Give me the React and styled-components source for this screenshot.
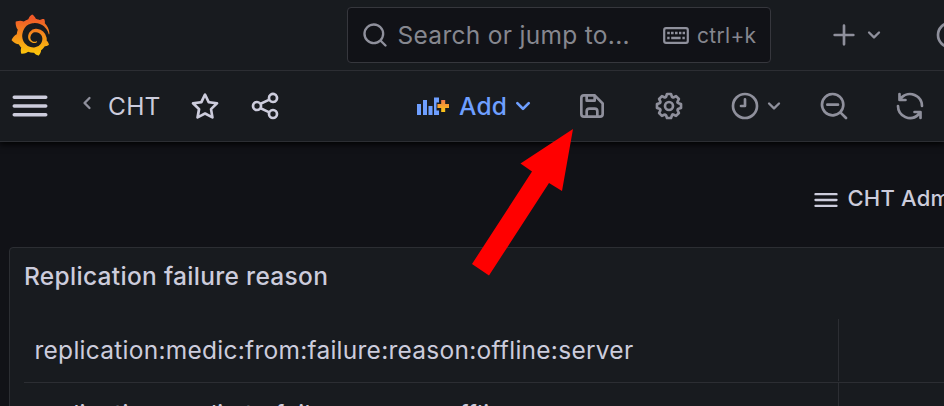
import React from 'react';
import styled, { createGlobalStyle } from 'styled-components';
import { SiGrafana } from 'react-icons/si';

const GlobalStyle = createGlobalStyle`
  * { box-sizing: border-box; }
  body {
    margin: 0;
    background: #111217;
    color: #ccccdc;
    font-family: Inter, "Liberation Sans", sans-serif;
    overflow: hidden;
  }
`;

const Page = styled.div`
  position: relative;
  width: 944px;
  height: 406px;
  overflow: hidden;
  display: flex;
  flex-direction: column;
  background: #111217;
`;

const Bar = styled.div`
  flex: none;
  display: flex;
  align-items: center;
  height: 71px;
  background: #181b1f;
  border-bottom: 1px solid #2c2e33;
`;

const Toolbar = styled(Bar)`
  box-shadow: 0 1px 7px 1px #000;
  clip-path: inset(0 0 -20px 0);
`;

const Svg = styled.svg`
  flex: none;
  display: block;
  width: ${(p) => p.$size}px;
  height: ${(p) => p.$size}px;
  margin-left: ${(p) => p.$gap || 0}px;
  margin-bottom: ${(p) => p.$lift || 0}px;
  fill: ${(p) => p.$color || '#8f909c'};
`;

const Logo = styled(SiGrafana)`
  flex: none;
  width: 41px;
  height: 42px;
  margin: 0 0 1px 10px;
`;

const GradientDefs = styled.svg`
  position: absolute;
  width: 0;
  height: 0;
`;

const SearchBox = styled.div`
  flex: none;
  display: flex;
  align-items: center;
  width: 424px;
  height: 56px;
  margin-left: 296px;
  padding-left: 13px;
  background: #111217;
  border: 1px solid #36373d;
  border-radius: 4px;
  color: #86878f;
  white-space: nowrap;
`;

const Placeholder = styled.span`
  width: 265px;
  margin-left: 8.5px;
  font-size: 24.5px;
  letter-spacing: 0.3px;
`;

const Keyboard = styled.svg`
  flex: none;
  width: 26px;
  height: 17px;
`;

const Shortcut = styled.span`
  margin-left: 8.5px;
  font-size: 21px;
  letter-spacing: 0.3px;
`;

const Divider = styled.div`
  width: 1px;
  height: 42px;
  margin-left: 23px;
  background: #3a3b41;
`;

const Crumb = styled.span`
  width: 54px;
  margin-left: 7px;
  font-size: 24.5px;
  letter-spacing: 0.26px;
`;

const AddButton = styled.div`
  flex: none;
  display: flex;
  align-items: center;
  width: 120px;
  margin-left: 136px;
  color: #6e9fff;
  font-size: 24.5px;
  font-weight: 500;
  letter-spacing: 0.26px;
`;

const AddPanel = styled.svg`
  flex: none;
  width: 33px;
  height: 20px;
`;

const AddLabel = styled.span`
  width: 48px;
  margin-left: 9px;
`;

const Submenu = styled.div`
  flex: none;
  display: flex;
  align-items: center;
  height: 105px;
  padding: 10px 0 0 812px;
  white-space: nowrap;
`;

const LinkText = styled.span`
  margin: 0 0 3px 7.5px;
  font-size: 22px;
  font-weight: 500;
  letter-spacing: 0.2px;
`;

const Panel = styled.section`
  flex: none;
  width: 960px;
  height: 190px;
  margin-left: 9px;
  padding-left: 14px;
  background: #181b1f;
  border: 1px solid #2c2e33;
  border-radius: 4px;
`;

const PanelTitle = styled.h2`
  margin: 0;
  height: 71px;
  line-height: 57px;
  font-size: 24.5px;
  font-weight: 500;
  letter-spacing: 0.3px;
`;

const Row = styled.div`
  display: flex;
  height: 64px;
  padding-bottom: 1px;
  border-bottom: 1px solid #2c2e33;
`;

const Cell = styled.div`
  width: 815px;
  padding-left: 10.5px;
  border-right: 1px solid #2c2e33;
  font-size: 24.5px;
  line-height: 63px;
  letter-spacing: 0.26px;
  white-space: nowrap;
`;

const Arrow = styled.svg`
  position: absolute;
  left: 472px;
  top: 129px;
  width: 102px;
  height: 147px;
  fill: #ff0000;
`;

const paths = {
  search: 'M21.71,20.29,18,16.61A9,9,0,1,0,16.61,18l3.68,3.68a1,1,0,0,0,1.42,0A1,1,0,0,0,21.71,20.29ZM11,18a7,7,0,1,1,7-7A7,7,0,0,1,11,18Z',
  searchMinus: 'M21.71,20.29,18,16.61A9,9,0,1,0,16.61,18l3.68,3.68a1,1,0,0,0,1.42,0A1,1,0,0,0,21.71,20.29ZM11,18a7,7,0,1,1,7-7A7,7,0,0,1,11,18Zm4-8H7a1,1,0,0,0,0,2h8a1,1,0,0,0,0-2Z',
  plus: 'M19,11H13V5a1,1,0,0,0-2,0v6H5a1,1,0,0,0,0,2h6v6a1,1,0,0,0,2,0V13h6a1,1,0,0,0,0-2Z',
  down: 'M17,9.17a1,1,0,0,0-1.41,0L12,12.71,8.46,9.17a1,1,0,0,0-1.41,0,1,1,0,0,0,0,1.42l4.24,4.24a1,1,0,0,0,1.42,0L17,10.59A1,1,0,0,0,17,9.17Z',
  left: 'M11.29,12l3.54-3.54a1,1,0,0,0,0-1.41,1,1,0,0,0-1.42,0L9.17,11.29a1,1,0,0,0,0,1.42L13.41,17a1,1,0,0,0,.71.29,1,1,0,0,0,.71-.29,1,1,0,0,0,0-1.41Z',
  star: 'M22,9.67A1,1,0,0,0,21.14,9l-5.69-.83L12.9,3a1,1,0,0,0-1.8,0L8.55,8.16,2.86,9a1,1,0,0,0-.81.68,1,1,0,0,0,.25,1l4.13,4-1,5.68A1,1,0,0,0,6.9,21.44L12,18.77l5.1,2.67a.93.93,0,0,0,.46.12,1,1,0,0,0,.59-.19,1,1,0,0,0,.4-1l-1-5.68,4.13-4A1,1,0,0,0,22,9.67Zm-6.15,4a1,1,0,0,0-.29.88l.72,4.2-3.76-2a1.06,1.06,0,0,0-.94,0l-3.76,2,.72-4.2a1,1,0,0,0-.29-.88l-3-3,4.21-.61a1,1,0,0,0,.76-.55L12,5.7l1.88,3.82a1,1,0,0,0,.76.55l4.21.61Z',
  share: 'M18,14a4,4,0,0,0-3.08,1.48l-5.1-2.35a3.64,3.64,0,0,0,0-2.26l5.1-2.35A4,4,0,1,0,14,6a4.17,4.17,0,0,0,.07.71L8.79,9.14a4,4,0,1,0,0,5.72l5.28,2.43A4.17,4.17,0,0,0,14,18a4,4,0,1,0,4-4ZM18,4a2,2,0,1,1-2,2A2,2,0,0,1,18,4ZM6,14a2,2,0,1,1,2-2A2,2,0,0,1,6,14Zm12,6a2,2,0,1,1,2-2A2,2,0,0,1,18,20Z',
  save: 'M20.71,9.29l-6-6a1,1,0,0,0-.32-.21A1.09,1.09,0,0,0,14,3H6A3,3,0,0,0,3,6V18a3,3,0,0,0,3,3H18a3,3,0,0,0,3-3V10A1,1,0,0,0,20.71,9.29ZM9,5h4V7H9Zm6,14H9V16a1,1,0,0,1,1-1h4a1,1,0,0,1,1,1Zm4-1a1,1,0,0,1-1,1H17V16a3,3,0,0,0-3-3H10a3,3,0,0,0-3,3v3H6a1,1,0,0,1-1-1V6A1,1,0,0,1,6,5H7V8A1,1,0,0,0,8,9h6a1,1,0,0,0,1-1V6.41l4,4Z',
  cog: 'M21.32,9.55l-1.89-.63.89-1.78A1,1,0,0,0,20.13,6L18,3.87a1,1,0,0,0-1.15-.19l-1.78.89-.63-1.89A1,1,0,0,0,13.5,2h-3a1,1,0,0,0-.95.68L8.92,4.57,7.14,3.68A1,1,0,0,0,6,3.87L3.87,6a1,1,0,0,0-.19,1.15l.89,1.78-1.89.63A1,1,0,0,0,2,10.5v3a1,1,0,0,0,.68.95l1.89.63-.89,1.78A1,1,0,0,0,3.87,18L6,20.13a1,1,0,0,0,1.15.19l1.78-.89.63,1.89a1,1,0,0,0,.95.68h3a1,1,0,0,0,.95-.68l.63-1.89,1.78.89A1,1,0,0,0,18,20.13L20.13,18a1,1,0,0,0,.19-1.15l-.89-1.78,1.89-.63A1,1,0,0,0,22,13.5v-3A1,1,0,0,0,21.32,9.55ZM20,12.78l-1.2.4A2,2,0,0,0,17.64,16l.57,1.14-1.1,1.1L16,17.64a2,2,0,0,0-2.79,1.16l-.4,1.2H11.22l-.4-1.2A2,2,0,0,0,8,17.64l-1.14.57-1.1-1.1L6.36,16A2,2,0,0,0,5.2,13.18L4,12.78V11.22l1.2-.4A2,2,0,0,0,6.36,8L5.79,6.89l1.1-1.1L8,6.36A2,2,0,0,0,10.82,5.2l.4-1.2h1.56l.4,1.2A2,2,0,0,0,16,6.36l1.14-.57,1.1,1.1L17.64,8a2,2,0,0,0,1.16,2.79l1.2.4ZM12,8a4,4,0,1,0,4,4A4,4,0,0,0,12,8Zm0,6a2,2,0,1,1,2-2A2,2,0,0,1,12,14Z',
  clock: 'M12,2A10,10,0,1,0,22,12,10,10,0,0,0,12,2Zm0,18a8,8,0,1,1,8-8A8,8,0,0,1,12,20ZM12,6a1,1,0,0,0-1,1v4H9a1,1,0,0,0,0,2h3a1,1,0,0,0,1-1V7A1,1,0,0,0,12,6Z',
  circle: 'M12,2A10,10,0,1,0,22,12,10,10,0,0,0,12,2Zm0,18a8,8,0,1,1,8-8A8,8,0,0,1,12,20Z',
  sync: 'M19.91,15.51H15.38a1,1,0,0,0,0,2h2.4A8,8,0,0,1,4,12a1,1,0,0,0-2,0,10,10,0,0,0,16.88,7.23V21a1,1,0,0,0,2,0V16.5A1,1,0,0,0,19.91,15.51ZM12,2A10,10,0,0,0,5.12,4.77V3a1,1,0,0,0-2,0V7.5a1,1,0,0,0,1,1h4.5a1,1,0,0,0,0-2H6.22A8,8,0,0,1,20,12a1,1,0,0,0,2,0A10,10,0,0,0,12,2Z',
  bars: 'M3,8H21a1,1,0,0,0,0-2H3A1,1,0,0,0,3,8Zm18,8H3a1,1,0,0,0,0,2H21a1,1,0,0,0,0-2Zm0-5H3a1,1,0,0,0,0,2H21a1,1,0,0,0,0-2Z',
};

function Icon({ name, size = 32, gap, color, lift }) {
  return (
    <Svg viewBox="0 0 24 24" $size={size} $gap={gap} $color={color} $lift={lift}>
      <path d={paths[name]} />
    </Svg>
  );
}

const bright = '#ccccdc';
const rows = [
  'replication:medic:from:failure:reason:offline:server',
  'replication:medic:to:failure:reason:offline:server',
];

export default function App() {
  return (
    <Page>
      <GlobalStyle />
      <GradientDefs>
        <defs>
          <linearGradient id="flame" x1="0" y1="0" x2="0" y2="1">
            <stop offset="0.1" stopColor="#f05a28" />
            <stop offset="1" stopColor="#fbca0a" />
          </linearGradient>
          <linearGradient id="plusFill" x1="0" y1="0" x2="0" y2="1">
            <stop offset="0" stopColor="#f2764a" />
            <stop offset="0.9" stopColor="#fbc21a" />
          </linearGradient>
        </defs>
      </GradientDefs>
      <Bar>
        <Logo fill="url(#flame)" color="url(#flame)" />
        <SearchBox>
          <Icon name="search" size={28} />
          <Placeholder>Search or jump to...</Placeholder>
          <Keyboard viewBox="0 0 26 17">
            <rect x="1.2" y="1.2" width="23.6" height="14.6" rx="1.8" fill="none" stroke="#8f909c" strokeWidth="2.2" />
            <path d="M4.2 6H6.8M8 6H10.6M12 6H14.6M16 6H18.4M19.6 6H22M4.2 11H6.6M8.2 11H17.6M19.4 11H21.8" stroke="#8f909c" strokeWidth="2.6" />
          </Keyboard>
          <Shortcut>ctrl+k</Shortcut>
        </SearchBox>
        <Icon name="plus" gap={57} />
        <Icon name="down" size={28} gap={0} />
        <Divider />
        <Icon name="circle" gap={22.5} />
      </Bar>
      <Toolbar>
        <Icon name="bars" size={42} gap={9} color={bright} />
        <Icon name="left" size={28} gap={22} lift={6} />
        <Crumb>CHT</Crumb>
        <Icon name="star" gap={27} color={bright} />
        <Icon name="share" gap={28} color={bright} />
        <AddButton>
          <AddPanel viewBox="0 0 33 20">
            <path d="M0 8h4v11H0zM6 4h4v15H6zM11.5 10h4v9h-4zM17 1.5h5v5h-2.5v8H22V19h-5z" fill="#6e9fff" />
            <path d="M24.2 4h4v4H32v4h-3.8v4h-4v-4h-3.8V8h3.8z" fill="url(#plusFill)" />
          </AddPanel>
          <AddLabel>Add</AddLabel>
          <Icon name="down" gap={0} color="#6e9fff" />
        </AddButton>
        <Icon name="save" gap={39} />
        <Icon name="cog" gap={45} />
        <Icon name="clock" gap={44} />
        <Icon name="down" size={28} gap={-1} />
        <Icon name="searchMinus" gap={30} />
        <Icon name="sync" gap={44} />
      </Toolbar>
      <Submenu>
        <Icon name="bars" size={28} color={bright} />
        <LinkText>CHT Admin</LinkText>
      </Submenu>
      <Panel>
        <PanelTitle>Replication failure reason</PanelTitle>
        {rows.map((text) => (
          <Row key={text}>
            <Cell>{text}</Cell>
          </Row>
        ))}
      </Panel>
      <Arrow viewBox="0 0 102 147">
        <path d="M101 0 48.5 34.5 60 42.5 0 135 17 146.5 77 54 90 62z" />
      </Arrow>
    </Page>
  );
}
